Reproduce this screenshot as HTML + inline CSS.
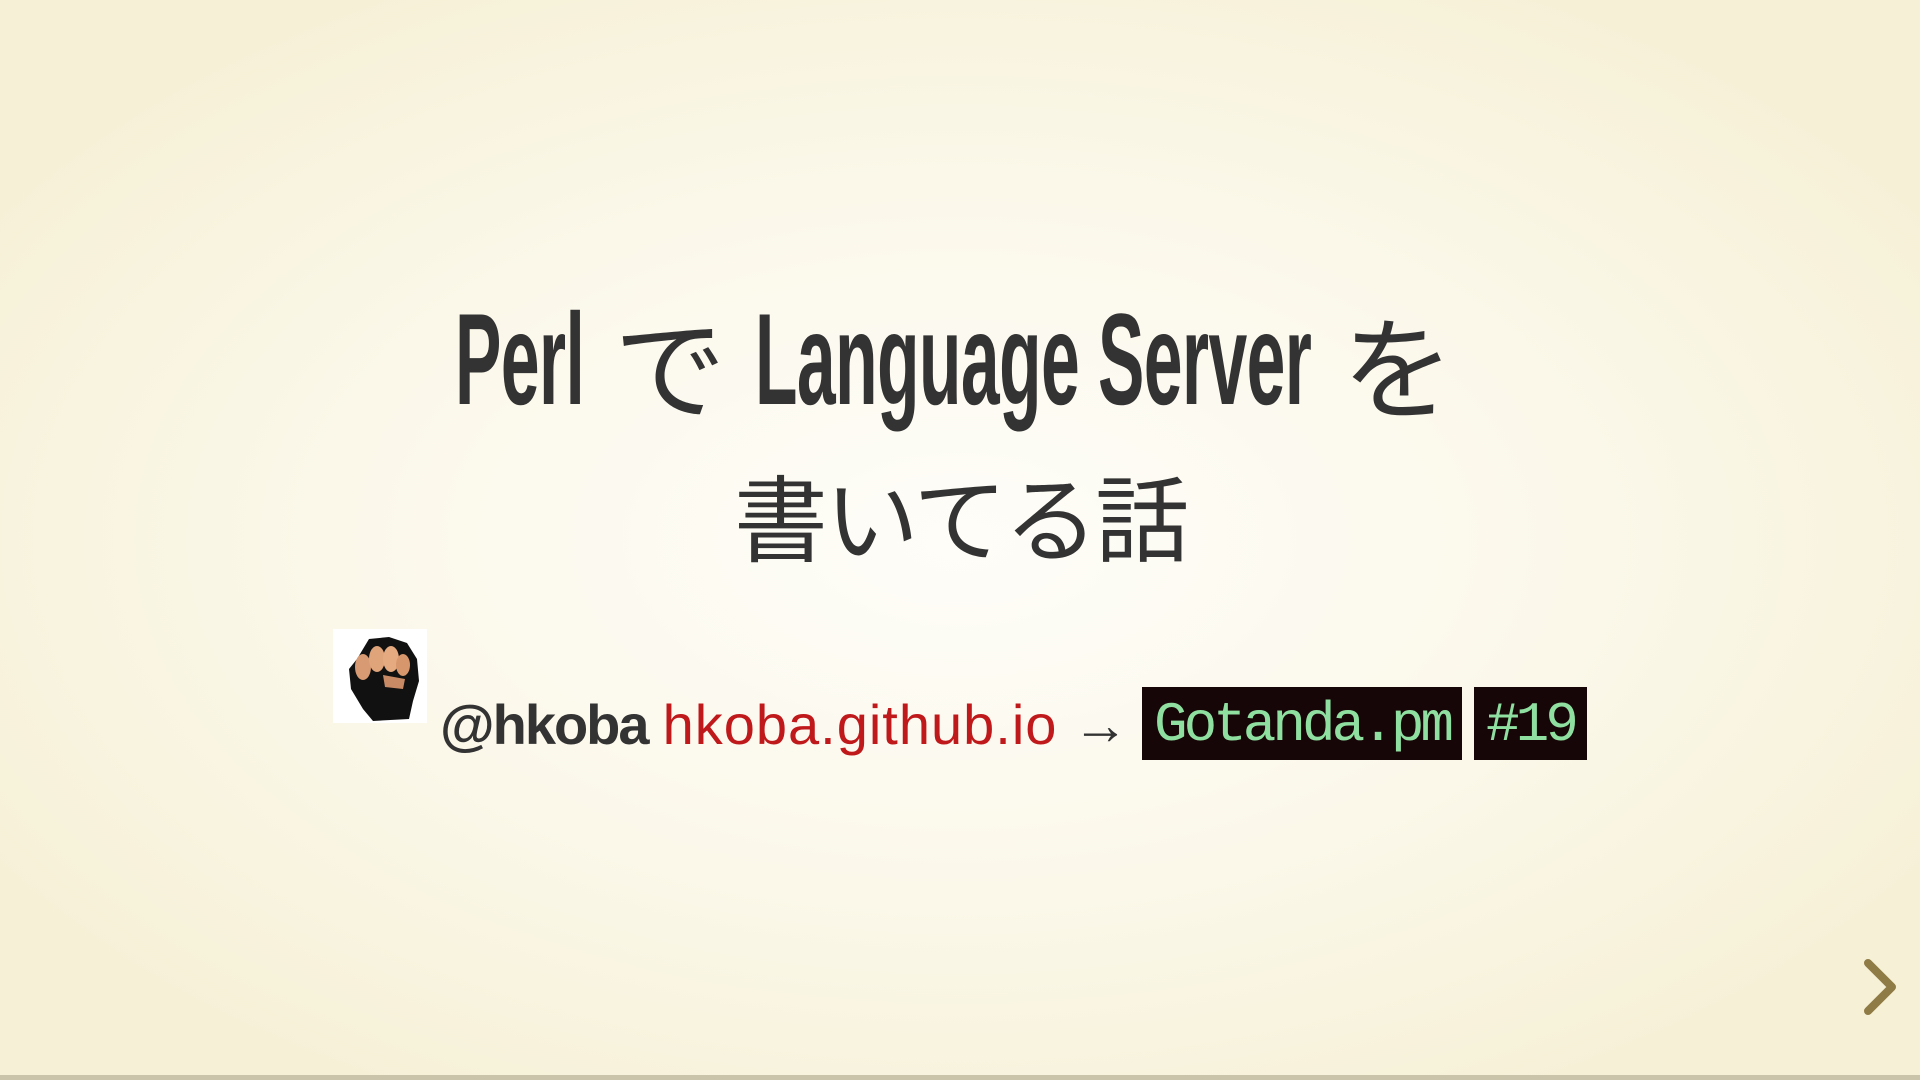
<!DOCTYPE html>
<html><head><meta charset="utf-8"><style>
html,body{margin:0;padding:0;width:1920px;height:1080px;overflow:hidden}
body{background:radial-gradient(ellipse 60% 60% at 50% 50%,#fefdf8 0%,#fbf8ea 55%,#f6f0d6 100%);font-family:"Liberation Sans","Noto Sans CJK JP",sans-serif;color:#333;position:relative}
.e{position:absolute;top:284px;font-weight:bold;font-size:130px;line-height:150px;transform:scaleX(0.535);transform-origin:0 0;white-space:nowrap;color:#333;letter-spacing:-1px}
.j{position:absolute;top:294px;font-size:112px;line-height:136px;font-family:"Noto Sans CJK JP",sans-serif;color:#333}
.t2{position:absolute;left:0;width:1920px;top:446px;text-align:center;font-size:94px;font-family:"Noto Sans CJK JP",sans-serif;color:#333;letter-spacing:-3px}
.av{position:absolute;left:333px;top:629px;width:94px;height:94px;background:#fff}
.line{position:absolute;left:440px;top:692px;font-size:56px;white-space:nowrap;letter-spacing:-0.5px}
.code{position:absolute;top:687px;height:73px;background:#170607;color:#8fe0a0;font-family:"Liberation Mono","DejaVu Sans Mono",monospace;font-size:56px;line-height:76px;text-align:center;letter-spacing:-4px;white-space:nowrap;overflow:hidden}
</style></head><body>
<span class="e" style="left:455px">Perl</span>
<span class="j" style="left:614px">で</span>
<span class="e" style="left:755px">Language Server</span>
<span class="j" style="left:1342px">を</span>
<div class="t2">書いてる話</div>
<div class="av"><svg width="94" height="94" viewBox="0 0 94 94"><path d="M24 30 L36 10 L56 8 L74 14 L84 30 L86 52 L80 72 L76 90 L40 92 L30 80 L18 60 L16 40Z" fill="#111"/><ellipse cx="30" cy="38" rx="8" ry="13" fill="#d79a72"/><ellipse cx="44" cy="30" rx="8" ry="13" fill="#e0a47a"/><ellipse cx="58" cy="30" rx="8" ry="13" fill="#e6aa80"/><ellipse cx="70" cy="36" rx="7" ry="11" fill="#d8966c"/><path d="M50 46 L72 50 L70 60 L52 58Z" fill="#c88a64"/></svg></div>
<div class="line"><span style="font-weight:bold;color:#333;letter-spacing:-2px">@hkoba</span> <span style="color:#c0191b;letter-spacing:1px">hkoba.github.io</span> <span style="color:#333">→</span></div>
<div class="code" style="left:1142px;width:320px">Gotanda.pm</div>
<div class="code" style="left:1474px;width:113px">#19</div>
<svg style="position:absolute;left:1860px;top:955px" width="40" height="65" viewBox="0 0 40 65"><path d="M8 8 L32 32 L8 56" fill="none" stroke="#8f7b45" stroke-width="8" stroke-linecap="round" stroke-linejoin="round"/></svg>
<div style="position:absolute;left:0;top:1075px;width:1920px;height:5px;background:#c9c4aa"></div>
</body></html>
